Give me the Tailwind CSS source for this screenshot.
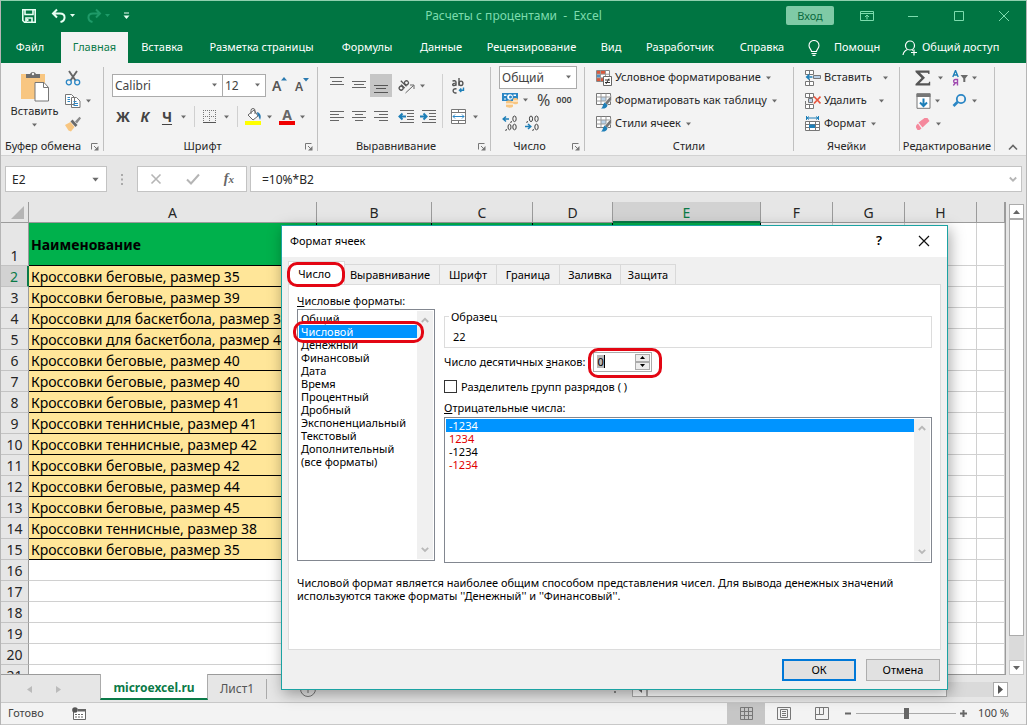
<!DOCTYPE html>
<html lang="ru">
<head>
<meta charset="utf-8">
<title>Расчеты с процентами - Excel</title>
<script src="https://cdn.jsdelivr.net/npm/@tailwindcss/browser@4"></script>
</head>
<body class="h-screen overflow-hidden bg-[#e6e6e6] font-['Noto_Sans',sans-serif] text-xs text-[#262626]">

<svg class="hidden" aria-hidden="true">
  <symbol id="caret" viewBox="0 0 7 4"><path d="M1 .5h5L3.500 3.500z" fill="#6b6b6b"/></symbol>
  <symbol id="launcher" viewBox="0 0 8 8"><path d="M.5 6.500V.5h6" fill="none" stroke="#777"/><path d="M3 3l3 3" stroke="#777" fill="none"/><path d="M7.500 3v4.500H3z" fill="#777"/></symbol>
  <symbol id="brushtable" viewBox="0 0 16 16"><path d="M.5.500h14v11H.5z" fill="#fff" stroke="#777"/><path d="M5 4h5v4H5z" fill="#b9d3ea"/><path d="M.5 4h14M.5 8h9M5 .5v11M10 .5v8" stroke="#999" fill="none"/><path d="M15.500 2v5L11 12 8.500 10z" fill="#777" stroke="#f3f3f3" stroke-width=".6"/><path d="M8.500 9.500l3 2.500c-.5 3-3 4-6.500 3.500 2-1 1.500-4 3.500-6z" fill="#1e7fb8"/></symbol>
</svg>

<div class="relative flex h-full flex-col overflow-hidden border-x border-t border-x-[#b5b5b5] border-t-[#8fd0ae]">

  <!-- Title bar -->
  <header class="grid h-[31px] shrink-0 grid-cols-[1fr_auto_1fr] items-center bg-[#007542] pb-0.5 text-[#7ddcae]">
    <div class="flex items-center pl-5">
      <button aria-label="Сохранить" class="flex w-4 justify-center"><svg class="h-4 w-4" viewBox="0 0 16 16" fill="none" stroke="#e8fff3" stroke-width="1.600"><path d="M1.800 1.800h12.400v12.400H3.500L1.800 12.500z"/><path d="M4 2v4.500h8V2M5 14v-4h6v4" /><path d="M6.500 11v2" stroke-width="2"/></svg></button>
      <button aria-label="Отменить" class="ml-3.5 flex w-4 justify-center"><svg class="h-4 w-4" viewBox="0 0 16 16" fill="none" stroke="#e8fff3" stroke-width="2"><path d="M6 1.500L2 5.500l4 4M2.500 5.500H9c6 0 6 7 .5 8.500"/></svg></button>
      <svg class="ml-0.5 h-1 w-[7px]" viewBox="0 0 7 4"><path d="M1 0h5L3.500 3z" fill="#e8fff3"/></svg>
      <button aria-label="Повторить" class="ml-2.5 flex w-4 justify-center"><svg class="h-4 w-4" viewBox="0 0 16 16" fill="none" stroke="#1e9a68" stroke-width="2"><path d="M10 1.500l4 4-4 4M13.500 5.500H7c-6 0-6 7-.5 8.500"/></svg></button>
      <svg class="ml-0.5 h-1 w-[7px]" viewBox="0 0 7 4"><path d="M1 0h5L3.500 3z" fill="#1e9a68"/></svg>
      <button aria-label="Настройка панели" class="ml-3"><svg class="h-2 w-[7px]" viewBox="0 0 7 8"><path d="M1 1h5" stroke="#e8fff3"/><path d="M.5 3.500h6L3.500 7z" fill="#e8fff3"/></svg></button>
    </div>
    <h1 class="whitespace-pre">Расчеты с процентами  -  Excel</h1>
    <div class="flex items-center justify-end">
      <button class="mr-2.5 h-[19px] w-12 rounded-xs bg-[#7fcaa6] text-[11px] leading-4 text-[#0a6b40]">Вход</button>
      <button aria-label="Параметры ленты" class="flex w-[46px] justify-center"><svg class="h-3 w-[14px]" viewBox="0 0 14 12" fill="none" stroke="#7ddcae"><path d="M.5 1.500h13v9H.5zM.5 3.500h13M7 9.500V5M5 7l2-2 2 2"/></svg></button>
      <button aria-label="Свернуть" class="flex w-[46px] justify-center"><svg class="h-3 w-3" viewBox="0 0 12 12" stroke="#7ddcae"><path d="M1 6.500h10"/></svg></button>
      <button aria-label="Развернуть" class="flex w-[46px] justify-center"><svg class="h-3 w-3" viewBox="0 0 12 12" fill="none" stroke="#7ddcae"><path d="M1.500 1.500h9v9h-9z"/></svg></button>
      <button aria-label="Закрыть" class="flex w-11 justify-center"><svg class="h-3 w-3" viewBox="0 0 12 12" stroke="#7ddcae"><path d="M1 1l10 10M11 1L1 11"/></svg></button>
    </div>
  </header>

  <!-- Ribbon tabs -->
  <nav class="flex h-[31px] shrink-0 items-stretch whitespace-nowrap bg-[#007542] text-[11px] text-white">
    <button class="w-[60px] pr-0.5">Файл</button>
    <button class="w-[67px] bg-[#f3f3f3] text-[#0a7a48]">Главная</button>
    <button class="w-[68px]">Вставка</button>
    <button class="w-[131px]">Разметка страницы</button>
    <button class="w-[80px]">Формулы</button>
    <button class="w-[68px]">Данные</button>
    <button class="w-[113px]">Рецензирование</button>
    <button class="w-[46px]">Вид</button>
    <button class="w-[92px]">Разработчик</button>
    <button class="w-[72px]">Справка</button>
    <button class="ml-[9px] flex items-center gap-[13px]"><svg class="h-4 w-3.5" viewBox="0 0 14 16" fill="none" stroke="#fff" stroke-width="1.100"><path d="M4.500 11.500c0-2-2.500-3-2.500-6a5 5 0 0110 0c0 3-2.500 4-2.500 6zM4.500 13.500h5M5.500 15.400h3"/></svg><span class="w-[50px] text-left">Помощн</span></button>
    <button class="ml-[18px] flex items-center gap-1"><svg class="h-4 w-4" viewBox="0 0 16 16" fill="none" stroke="#fff" stroke-width="1.200"><circle cx="8" cy="5.500" r="4.500"/><path d="M5.500 9.500C3 10.500 1.500 12 1 15M10 9.700l1 .8M12 9.500v6M9 12.500h6"/></svg>Общий доступ</button>
  </nav>

  <!-- Ribbon -->
  <section class="flex h-[93px] shrink-0 whitespace-nowrap border-b border-[#d2d2d2] bg-[#f3f3f3] text-[11px]">
    <!-- Clipboard -->
    <div class="flex w-[102px] shrink-0 flex-col">
      <div class="flex flex-1">
        <button class="flex w-[61px] flex-col items-center pl-1.5 pt-2">
          <svg class="h-[31px] w-7" viewBox="0 0 28 31"><path d="M0 3h24v25H0z" fill="#f8c681"/><path d="M5 3h4a3.200 3.200 0 016 0h4v4H5z" fill="#6e6e6e"/><circle cx="12" cy="3" r="1.200" fill="#f3f3f3"/><path d="M14 11.500h9l4.500 5V30H14z" fill="#fff" stroke="#777"/><path d="M22.500 11.500v5h5" fill="none" stroke="#777"/></svg>
          <span class="mt-0.5">Вставить</span>
          <svg class="mt-1 h-1 w-[7px]"><use href="#caret"/></svg>
        </button>
        <div class="flex flex-col pt-[3px]">
          <button aria-label="Вырезать" class="flex h-[23px] w-[22px] items-center justify-center"><svg class="h-4 w-4" viewBox="0 0 16 16" fill="none"><path d="M4 1l6.500 9.500M12 1L5.500 10.500" stroke="#666" stroke-width="1.900"/><circle cx="3.800" cy="12.300" r="2.500" stroke="#2a86c5" stroke-width="1.300"/><circle cx="12.200" cy="12.300" r="2.500" stroke="#2a86c5" stroke-width="1.300"/></svg></button>
          <button aria-label="Копировать" class="flex h-[23px] items-center gap-1 pl-[3px]"><svg class="h-4 w-4" viewBox="0 0 16 16" fill="#fff" stroke="#777"><path d="M.5 1.500h6l3 3v7h-9zM6.500 4.500h5l3.500 3.500v6.500H6.500z"/><path d="M2.500 4.500H5M2.500 6.500H5M2.500 8.500H5M8.500 8.500h3M8.500 10.500h4.500M8.500 12.500h4.500" stroke="#2a86c5"/></svg><svg class="h-1 w-[7px]"><use href="#caret"/></svg></button>
          <button aria-label="Формат по образцу" class="flex h-[23px] w-[22px] items-center justify-center"><svg class="h-4 w-4" viewBox="0 0 16 16"><path d="M0 9l5.500-3 4 5-3.500 4.500-2.500-1z" fill="#f8c681"/><path d="M5.500 5.500l2-2 5 5.500-2 2z" fill="#6a6a6a"/><path d="M10 5.500L14.500.8l1.500 1.500L12 7.500z" fill="#8a8a8a"/></svg></button>
        </div>
      </div>
      <div class="flex h-[17px] items-center pl-1"><span>Буфер обмена</span><svg class="ml-auto mr-1 h-2 w-2"><use href="#launcher"/></svg></div>
    </div>
    <div class="my-1 w-px bg-[#c0c0c0]"></div>

    <!-- Font -->
    <div class="flex w-[213px] shrink-0 flex-col">
      <div class="flex flex-1 flex-col gap-2 pl-2 pt-[11px]">
        <div class="flex h-[23px] items-center">
          <div class="relative h-full w-[111px] border border-[#ababab] bg-white text-xs"><select aria-label="Шрифт" class="h-full w-full appearance-none pl-0.5 text-[#444]"><option>Calibri</option></select><svg class="pointer-events-none absolute right-1 top-2 h-1 w-[7px]"><use href="#caret"/></svg></div>
          <div class="relative -ml-px h-full w-[44px] border border-[#ababab] bg-white text-xs"><select aria-label="Размер" class="h-full w-full appearance-none pl-0.5 text-[#444]"><option>12</option></select><svg class="pointer-events-none absolute right-1 top-2 h-1 w-[7px]"><use href="#caret"/></svg></div>
          <button aria-label="Увеличить размер" class="ml-1.5 flex w-[18px]"><span class="text-sm font-semibold text-[#555]">A</span><svg class="h-1.5 w-1.5" viewBox="0 0 6 6"><path d="M0 4.500l3-3.500 3 3.500z" fill="#2a7ab0"/></svg></button>
          <button aria-label="Уменьшить размер" class="ml-[5px] flex w-[18px]"><span class="pt-0.5 text-xs font-semibold text-[#555]">A</span><svg class="h-1.5 w-1.5" viewBox="0 0 6 6"><path d="M0 1h6L3 4.500z" fill="#2a7ab0"/></svg></button>
        </div>
        <div class="flex h-[23px] items-center text-sm text-[#444]">
          <button class="w-[22px] font-bold">Ж</button>
          <button class="w-[22px] font-bold italic">К</button>
          <button class="w-[22px] font-bold underline underline-offset-2">Ч</button>
          <svg class="ml-0.5 h-1 w-[7px]"><use href="#caret"/></svg>
          <div class="ml-[7px] h-[21px] w-px bg-[#d0d0d0]"></div>
          <button aria-label="Границы" class="ml-2 flex"><svg class="h-[13px] w-[13px]" viewBox="0 0 13 13" fill="none" stroke="#777"><path d="M.5 0v12M6.500 0v12M12.500 0v12M0 .5h13M0 6.500h13" stroke-dasharray="1 1"/><path d="M0 12.500h13" stroke="#555"/></svg></button>
          <svg class="ml-[7px] h-1 w-[7px]"><use href="#caret"/></svg>
          <div class="ml-[7px] h-[21px] w-px bg-[#d0d0d0]"></div>
          <button aria-label="Цвет заливки" class="ml-[7px] flex"><svg class="h-[17px] w-[17px]" viewBox="0 0 17 17"><path d="M3 7l6-5 4 6-5 4z" fill="#fff" stroke="#666"/><path d="M6 6V2.500a2 2 0 014 0V6" fill="none" stroke="#666"/><path d="M12 4c4 1 4.500 5 3 8-1-2-1-4-2.500-5z" fill="#2a7ab0"/><path d="M0 13h16v4H0z" fill="#ff0"/></svg></button>
          <svg class="ml-1 h-1 w-[7px]"><use href="#caret"/></svg>
          <button aria-label="Цвет текста" class="ml-1.5 flex flex-col items-center"><span class="h-[13px] text-sm font-bold leading-[13px] text-[#666]">А</span><span class="h-1 w-4 bg-[#f00000]"></span></button>
          <svg class="ml-1 h-1 w-[7px]"><use href="#caret"/></svg>
        </div>
      </div>
      <div class="flex h-[17px] items-center"><span class="flex-1 pr-1 text-center">Шрифт</span><svg class="mr-1 h-2 w-2"><use href="#launcher"/></svg></div>
    </div>
    <div class="my-1 w-px bg-[#c0c0c0]"></div>

    <!-- Alignment -->
    <div class="flex w-[172px] shrink-0 flex-col">
      <div class="flex flex-1 pl-2 pt-[11px]">
        <div class="flex w-[116px] flex-col gap-2">
          <div class="flex h-[23px] items-center">
            <button aria-label="По верхнему краю" class="flex h-full w-[22px] justify-center pt-[3px]"><svg class="h-3 w-[14px]" viewBox="0 0 14 12" stroke="#666"><path d="M0 .5h14M2 4.500h10M0 7.500h14"/></svg></button>
            <button aria-label="По середине" class="flex h-full w-[22px] items-center justify-center"><svg class="h-3 w-[14px]" viewBox="0 0 14 12" stroke="#666"><path d="M0 1.500h14M2 4.500h10M0 7.500h14"/></svg></button>
            <button aria-label="По нижнему краю" class="flex h-full w-[22px] items-end justify-center bg-[#c6c6c6] pb-1"><svg class="h-3 w-[14px]" viewBox="0 0 14 12" stroke="#555"><path d="M0 4.500h14M2 7.500h10M0 11.500h14"/></svg></button>
            <button aria-label="Ориентация" class="ml-1.5 flex"><svg class="h-4 w-[17px] overflow-visible" viewBox="0 0 17 16" fill="none"><g transform="rotate(-45 6 8)" stroke="#555" stroke-width="1.300"><circle cx="2.500" cy="7.500" r="2"/><path d="M5 5v5M7.500 2v8"/><circle cx="10" cy="7.500" r="2"/></g><path d="M7.500 15L15.500 7.500M12 7h4v4" stroke="#666"/></svg></button>
            <svg class="ml-1 h-1 w-[7px]"><use href="#caret"/></svg>
          </div>
          <div class="flex h-[23px] items-center">
            <button aria-label="По левому краю" class="flex w-[22px] justify-center"><svg class="h-3 w-[14px]" viewBox="0 0 14 12" stroke="#666"><path d="M0 .5h14M0 3.500h9M0 6.500h14M0 9.500h9"/></svg></button>
            <button aria-label="По центру" class="flex w-[22px] justify-center"><svg class="h-3 w-[14px]" viewBox="0 0 14 12" stroke="#666"><path d="M0 .5h14M3 3.500h8M0 6.500h14M3 9.500h8"/></svg></button>
            <button aria-label="По правому краю" class="flex w-[22px] justify-center"><svg class="h-3 w-[14px]" viewBox="0 0 14 12" stroke="#666"><path d="M0 .5h14M5 3.500h9M0 6.500h14M5 9.500h9"/></svg></button>
            <button aria-label="Уменьшить отступ" class="ml-1.5 flex"><svg class="h-[14px] w-4" viewBox="0 0 16 14" fill="none" stroke="#666"><path d="M2 .5h14M9 3.500h7M9 6.500h7M9 9.500h7M2 12.500h14"/><path d="M8 6.500H2M4.500 3.500l-3 3 3 3" stroke="#1e7fb8" stroke-width="2"/></svg></button>
            <button aria-label="Увеличить отступ" class="ml-1.5 flex"><svg class="h-[14px] w-4" viewBox="0 0 16 14" fill="none" stroke="#666"><path d="M2 .5h14M9 3.500h7M9 6.500h7M9 9.500h7M2 12.500h14"/><path d="M0 6.500h6M3.500 3.500l3 3-3 3" stroke="#1e7fb8" stroke-width="2"/></svg></button>
          </div>
        </div>
        <div class="h-[54px] w-px bg-[#d0d0d0]"></div>
        <div class="flex flex-col gap-2 pl-2">
          <button aria-label="Перенести текст" class="flex h-[23px] items-center"><svg class="h-4 w-4" viewBox="0 0 16 16" fill="none" stroke="#555" stroke-width="1.400"><path d="M1.500 3.200c1-.7 3.500-.7 3.500 1v3.500M5 5.200c-4-.3-4 2.500-2 2.300 1 0 2-.8 2-1.500M8 0v7.700"/><ellipse cx="10" cy="5.300" rx="1.900" ry="2.200"/><path d="M5.500 11c-4.500-1.500-4.500 5 0 3.800"/><path d="M12.500 9.500v2.800H8.500M10.300 10.500L8.500 12.300l1.800 1.700" stroke="#1e7fb8"/></svg></button>
          <button aria-label="Объединить" class="flex h-[23px] items-center gap-1.5"><svg class="h-[15px] w-[15px]" viewBox="0 0 15 15" fill="#fff" stroke="#777"><path d="M.5.500h14v14H.5zM7.500.500v3M7.500 11.500v3M.5 3.500h14M.5 11.500h14"/><path d="M2 7.500h11M4 5.500l-2 2 2 2M11 5.500l2 2-2 2" fill="none" stroke="#2a86c5"/></svg><svg class="h-1 w-[7px]"><use href="#caret"/></svg></button>
        </div>
      </div>
      <div class="flex h-[17px] items-center"><span class="flex-1 pr-1 text-center">Выравнивание</span><svg class="mr-1 h-2 w-2"><use href="#launcher"/></svg></div>
    </div>
    <div class="my-1 w-px bg-[#c0c0c0]"></div>

    <!-- Number -->
    <div class="flex w-[93px] shrink-0 flex-col">
      <div class="flex flex-1 flex-col pl-2 pt-[3px]">
        <div class="relative h-[23px] w-[78px] border border-[#ababab] bg-white text-xs"><select aria-label="Числовой формат" class="h-full w-full appearance-none pl-0.5 text-[#444]"><option>Общий</option></select><svg class="pointer-events-none absolute right-1 top-2 h-1 w-[7px]"><use href="#caret"/></svg></div>
        <div class="flex h-[22px] items-center pl-[3px] text-[#444]">
          <button aria-label="Финансовый формат" class="flex"><svg class="h-4 w-4" viewBox="0 0 16 16"><path d="M0 1h16v8H0z" fill="#2a86c5"/><path d="M2 2.500h2.500v1.500H2zM11.500 2.500H14v1.500h-2.500zM2 6.500h2v1H2z" fill="#fff"/><circle cx="8" cy="5" r="2.800" fill="#fff"/><circle cx="8.500" cy="5" r="1.500" fill="#2a86c5"/><path d="M4 10c0-2 6-2 7 0v4.500c-1 2-7 1-7 0zM11 7c1-1.500 5-1 5 .5v4c-1 1-4 1-5 0z" fill="#f8c681"/><path d="M4 12h7M11 9h5" stroke="#fff"/></svg></button>
          <svg class="ml-1 h-1 w-[7px]"><use href="#caret"/></svg>
          <button class="ml-2 text-base">%</button>
          <button class="ml-1.5 text-[9px] font-semibold">000</button>
        </div>
        <div class="flex h-[23px] items-center gap-1.5 pl-[3px]">
          <button aria-label="Увеличить разрядность" class="flex"><svg class="h-4 w-4" viewBox="0 0 16 16" fill="none" stroke="#444"><ellipse cx="12.500" cy="3.800" rx="1.700" ry="2.800"/><path d="M9.500 6l-.8 2M4.500 14l-.8 2"/><ellipse cx="7.500" cy="12" rx="1.500" ry="2.800"/><ellipse cx="12.500" cy="12" rx="1.700" ry="2.800"/><path d="M7 4H1.500M4 1.500L1.200 4 4 6.500" stroke="#1e7fb8" stroke-width="1.500"/></svg></button>
          <button aria-label="Уменьшить разрядность" class="flex"><svg class="h-4 w-4" viewBox="0 0 16 16" fill="none" stroke="#444"><ellipse cx="7" cy="3.800" rx="1.600" ry="2.800"/><ellipse cx="12.500" cy="3.800" rx="1.700" ry="2.800"/><path d="M3.500 6l-.8 2M9.500 14l-.8 2"/><ellipse cx="12.500" cy="12" rx="1.700" ry="2.800"/><path d="M1 11.500h5.500M4 9l2.800 2.500L4 14" stroke="#1e7fb8" stroke-width="1.500"/></svg></button>
        </div>
      </div>
      <div class="flex h-[17px] items-center"><span class="flex-1 pr-1 text-center">Число</span><svg class="mr-1 h-2 w-2"><use href="#launcher"/></svg></div>
    </div>
    <div class="my-1 w-px bg-[#c0c0c0]"></div>

    <!-- Styles -->
    <div class="flex w-[208px] shrink-0 flex-col">
      <div class="flex flex-1 flex-col items-start pl-[11px] pt-[3px]">
        <button class="flex h-[23px] items-center"><svg class="h-4 w-4" viewBox="0 0 16 16"><path d="M.5.500h13v11H.5z" fill="#fff" stroke="#888"/><path d="M1 1h6v3H1zM1 8h6v3H1z" fill="#d9593d"/><path d="M1 4.500h4v3H1z" fill="#4d8fc4"/><path d="M7 1h3v3H7z" fill="#d9593d"/><path d="M4.500.500v11M9.500.500v6M.5 4.200h13M.5 7.800h7" stroke="#999" fill="none"/><path d="M7.500 6.500h8v9h-8z" fill="#fff" stroke="#666"/><path d="M9 10h5M9 12.500h5M13 8.500l-3 5.500" stroke="#333" fill="none"/></svg><span class="ml-[3px]">Условное форматирование</span><svg class="ml-1 h-1 w-[7px]"><use href="#caret"/></svg></button>
        <button class="flex h-[23px] items-center"><svg class="h-4 w-4"><use href="#brushtable"/></svg><span class="ml-[3px]">Форматировать как таблицу</span><svg class="ml-1 h-1 w-[7px]"><use href="#caret"/></svg></button>
        <button class="flex h-[23px] items-center"><svg class="h-4 w-4"><use href="#brushtable"/></svg><span class="ml-[3px]">Стили ячеек</span><svg class="ml-1 h-1 w-[7px]"><use href="#caret"/></svg></button>
      </div>
      <div class="flex h-[17px] items-center justify-center">Стили</div>
    </div>
    <div class="my-1 w-px bg-[#c0c0c0]"></div>

    <!-- Cells -->
    <div class="flex w-[105px] shrink-0 flex-col">
      <div class="flex flex-1 flex-col items-start pl-[11px] pt-[3px]">
        <button class="flex h-[23px] items-center"><svg class="h-4 w-4" viewBox="0 0 16 16" fill="#fff" stroke="#777"><path d="M.5.500h8v4h-8zM4.500.500v4M.5 11.500h8v4h-8zM4.500 11.500v4M4.500 9v3"/><path d="M8.500 5.500h7v3h-7z" fill="#b9cfe6"/><path d="M7.500 7H2M4.500 4.500L1.800 7l2.700 2.500" fill="none" stroke="#1e7fb8" stroke-width="1.700"/></svg><span class="ml-[3px] w-[50px] text-left">Вставить</span><svg class="ml-2 h-1 w-[7px]"><use href="#caret"/></svg></button>
        <button class="flex h-[23px] items-center"><svg class="h-4 w-4" viewBox="0 0 16 16" fill="#fff" stroke="#777"><path d="M.5.500h8v4h-8zM4.500.500v4M.5 11.500h8v4h-8zM4.500 11.500v4M.5 8v3"/><path d="M3.500 5.500h4v4h-4z" fill="#b9cfe6"/><path d="M9 3.500l6.500 7M15.500 3.500l-6.500 7" stroke="#e8563f" stroke-width="1.700"/></svg><span class="ml-[3px] w-[46px] text-left">Удалить</span><svg class="ml-2 h-1 w-[7px]"><use href="#caret"/></svg></button>
        <button class="flex h-[23px] items-center"><svg class="h-4 w-4" viewBox="0 0 16 16" fill="#fff" stroke="#777"><path d="M.5 5.500h14v9H.5z"/><path d="M.5 8.500h14M.5 11.500h14M4.500 5.500v9M10.500 5.500v9"/><path d="M4 8.500h6v3.500H4z" fill="#1e7fb8" stroke="none"/><path d="M1 2h12M1.500 0v4M13.500 0v4M4 .5L2 2l2 1.500M11 .5L13 2l-2 1.500" stroke="#1e7fb8" fill="none"/></svg><span class="ml-[3px]">Формат</span><svg class="ml-1 h-1 w-[7px]"><use href="#caret"/></svg></button>
      </div>
      <div class="flex h-[17px] items-center justify-center">Ячейки</div>
    </div>
    <div class="my-1 w-px bg-[#c0c0c0]"></div>

    <!-- Editing -->
    <div class="flex w-[94px] shrink-0 flex-col">
      <div class="grid flex-1 auto-rows-[23px] grid-cols-[31px_auto] content-start items-center justify-start pl-[15px] pt-[3px]">
        <button aria-label="Автосумма" class="flex items-center gap-1.5"><svg class="h-4 w-4" viewBox="0 0 16 16"><path d="M.5.500h14V4h-1.200c0-1-.5-1.300-1.300-1.300H5l5 5-5.500 5.500h8c1 0 1.500-.4 1.500-1.500h1.200V15.500H.5V14l6-6-6-6z" fill="#555"/></svg><svg class="h-1 w-[7px]"><use href="#caret"/></svg></button>
        <button aria-label="Сортировка и фильтр" class="ml-1.5 flex items-center gap-[3px]"><svg class="h-4 w-4" viewBox="0 0 16 16" fill="none"><path d="M.8 7L3.500.5 6.200 7M1.800 5h3.500" stroke="#1e7fb8" stroke-width="1.400"/><path d="M5.500 15.500V9.500H3.300a1.600 1.600 0 000 3.300h2.200M3.500 12.800L1.300 15.500" stroke="#a04ab0" stroke-width="1.400"/><path d="M8.500 5H16l-2.700 3.500v3.500h-2V8.500z" fill="#6a6a6a"/></svg><svg class="h-1 w-[7px]"><use href="#caret"/></svg></button>
        <button aria-label="Заполнить" class="flex items-center gap-[3px]"><svg class="ml-px h-4 w-[15px]" viewBox="0 0 15 16"><path d="M1 .8h13v14.500H1z" fill="#fff" stroke="#777"/><path d="M.5.500h14v3.500H.5z" fill="#777"/><path d="M7.500 5.500V13M4 9.500L7.500 13 11 9.500" fill="none" stroke="#1e7fb8" stroke-width="2"/></svg><svg class="h-1 w-[7px]"><use href="#caret"/></svg></button>
        <button aria-label="Найти" class="ml-1.5 flex items-center gap-[3px]"><svg class="h-[15px] w-4" viewBox="0 0 16 15" fill="none" stroke="#2a86c5"><circle cx="9" cy="6" r="4.200" stroke-width="1.800"/><path d="M5.500 9L1.500 13" stroke-width="2.600"/></svg><svg class="h-1 w-[7px]"><use href="#caret"/></svg></button>
        <button aria-label="Очистить" class="flex items-center gap-1"><svg class="h-4 w-4" viewBox="0 0 16 16"><path d="M9.500 2h3L14.500 5l-7 6.500-4-5z" fill="#f5889c"/><path d="M3 7.500l3.500 5-2 1.500H2.500L1 11.500v-2z" fill="#f5889c"/></svg><svg class="h-1 w-[7px]"><use href="#caret"/></svg></button>
      </div>
      <div class="flex h-[17px] items-center justify-center">Редактирование</div>
    </div>
    <div class="my-1 w-px bg-[#c0c0c0]"></div>
    <div class="flex flex-1 items-end justify-center pb-1 pl-1"><button aria-label="Свернуть ленту"><svg class="h-2 w-2.5" viewBox="0 0 10 8" fill="none" stroke="#666" stroke-width="1.600"><path d="M1 6.500l4-4 4 4"/></svg></button></div>
  </section>

  <!-- Formula bar -->
  <section class="flex h-[46px] shrink-0 items-start px-1 pt-2.5">
    <div class="relative h-[26px] w-[102px] border border-[#c3c3c3] bg-white"><input aria-label="Имя ячейки" value="E2" class="h-full w-full pl-1.5 outline-none"><svg class="pointer-events-none absolute right-1.5 top-2.5 h-[5px] w-[9px]" viewBox="0 0 7 4"><use href="#caret"/></svg></div>
    <svg class="mx-3.5 mt-2 h-3 w-0.5" viewBox="0 0 2 12"><path d="M0 0h2v2H0zM0 4.500h2v2H0zM0 9h2v2H0z" fill="#aaa"/></svg>
    <div class="flex h-[26px] w-[110px] items-center justify-around border border-[#c3c3c3] bg-white">
      <button aria-label="Отмена ввода"><svg class="h-3 w-3" viewBox="0 0 12 12" stroke="#b5b5b5" stroke-width="1.600"><path d="M1.500 1.500l9 9M10.500 1.500l-9 9"/></svg></button>
      <button aria-label="Ввод"><svg class="h-3 w-3.5" viewBox="0 0 14 12" fill="none" stroke="#b5b5b5" stroke-width="2"><path d="M1 6.500L5 10.500 13 1.500"/></svg></button>
      <button aria-label="Вставить функцию" class="font-['Liberation_Serif',serif] text-sm font-semibold italic leading-4 text-[#666]">f<span class="text-[11px]">x</span></button>
    </div>
    <div class="relative ml-[3px] h-[26px] flex-1 border border-[#c3c3c3] bg-white"><input aria-label="Строка формул" value="=10%*B2" class="h-full w-full pl-[11px] outline-none"><svg class="pointer-events-none absolute right-1 top-2 h-2 w-2" viewBox="0 0 8 8" fill="none" stroke="#b5b5b5" stroke-width="1.800"><path d="M.8 2.500L4 5.700l3.200-3.200"/></svg></div>
  </section>

  <!-- Worksheet -->
  <main class="flex min-h-0 flex-1">
    <div class="min-w-0 flex-1 overflow-hidden border-b border-r border-[#9b9b9b] bg-white">
      <table class="w-full table-fixed border-separate border-spacing-0 text-sm">
        <colgroup><col class="w-7"><col class="w-[288px]"><col class="w-[115px]"><col class="w-[101px]"><col class="w-20"><col class="w-[148px]"><col class="w-[72px]"><col class="w-[72px]"><col class="w-[72px]"><col></colgroup>
        <thead><tr id="letters"></tr></thead>
        <tbody id="rows"></tbody>
      </table>
    </div>
    <div class="flex w-5 flex-col items-center pt-0.5">
      <button aria-label="Вверх" class="flex h-[15px] w-[15px] items-center justify-center border border-[#ababab] bg-white"><svg class="h-1 w-[7px]" viewBox="0 0 7 4"><path d="M0 4h7L3.500 0z" fill="#666"/></svg></button>
      <div class="flex w-[15px] flex-1 flex-col bg-[#dadada]"><div class="mb-6 flex-1 border border-[#ababab] bg-white"></div></div>
      <button aria-label="Вниз" class="flex h-[15px] w-[15px] items-center justify-center border border-[#c8c8c8] bg-white"><svg class="h-1 w-[7px]" viewBox="0 0 7 4"><path d="M0 0h7L3.500 4z" fill="#666"/></svg></button>
    </div>
  </main>

  <!-- Sheet tabs -->
  <section class="flex h-7 shrink-0 items-start border-b border-[#c8c8c8]">
    <div class="flex h-7 w-[99px] items-center gap-6 pl-[26px]"><svg class="h-[7px] w-[5px]" viewBox="0 0 5 7"><path d="M5 0v7L0 3.500z" fill="#bbb"/></svg><svg class="h-[7px] w-[5px]" viewBox="0 0 5 7"><path d="M0 0v7l5-3.500z" fill="#bbb"/></svg></div>
    <button class="-mt-px h-[26px] w-[108px] border-x border-b-2 border-x-[#ababab] border-b-[#0a7a48] bg-white pt-1 font-bold text-[#0a7a48]">microexcel.ru</button>
    <button class="h-[27px] w-[58px] text-[#555]">Лист1</button>
    <div class="mt-1 h-5 w-px bg-[#aaa]"></div>
    <button aria-label="Новый лист" class="ml-[33px] mt-1.5"><svg class="h-4 w-4" viewBox="0 0 16 16" fill="none" stroke="#777"><circle cx="8" cy="8" r="7.500"/><path d="M8 4v8M4 8h8"/></svg></button>
    <div class="ml-auto mr-4 mt-4 h-0.5 w-0.5 bg-[#888]"></div>
    <div class="mr-[18px] mt-[7px] flex h-[15px] w-[376px]">
      <button aria-label="Влево" class="flex w-[15px] items-center justify-center border border-[#ababab] bg-white"><svg class="h-[7px] w-1" viewBox="0 0 4 7"><path d="M4 0v7L0 3.500z" fill="#666"/></svg></button>
      <div class="flex flex-1 bg-[#dadada]"><div class="w-[300px] border border-[#ababab] bg-white"></div></div>
      <button aria-label="Вправо" class="flex w-[15px] items-center justify-center border border-[#ababab] bg-white"><svg class="h-[9px] w-[5px]" viewBox="0 0 5 9"><path d="M0 0v9l5-4.500z" fill="#555"/></svg></button>
    </div>
  </section>

  <!-- Status bar -->
  <footer class="flex h-[22px] shrink-0 items-center border-b border-[#c8c8c8] bg-[#f3f3f3] text-[11px] text-[#444]">
    <span class="ml-[7px] w-16">Готово</span>
    <svg class="h-[13px] w-[14px]" viewBox="0 0 14 13"><path d="M1.500 5v7.500h12v-10H6" fill="#fff" stroke="#666"/><path d="M6 2h8v2.500H6z" fill="#666"/><path d="M3 7.500h9M3 10h9" stroke="#666" stroke-dasharray="2 1"/><circle cx="3" cy="3" r="2.800" fill="#555"/></svg>
    <div class="ml-auto flex h-full items-center">
      <button aria-label="Обычный" class="flex h-full w-[38px] items-center justify-center bg-[#c6c6c6]"><svg class="h-[13px] w-[13px]" viewBox="0 0 13 13" fill="none" stroke="#777"><path d="M.5.500h12v12H.5zM4.500.500v12M8.500.500v12M.5 4.500h12M.5 8.500h12"/></svg></button>
      <button aria-label="Разметка страницы" class="flex w-[38px] justify-center"><svg class="h-[13px] w-[14px]" viewBox="0 0 14 13" fill="none" stroke="#777"><path d="M.5.500h13v12H.5zM3.500 2.500h7v8h-7zM5 4.500h4M5 6.500h4M5 8.500h4"/></svg></button>
      <button aria-label="Страничный режим" class="flex w-[38px] justify-center"><svg class="h-[13px] w-[14px]" viewBox="0 0 14 13" fill="none" stroke="#777"><path d="M.5.500h13v12H.5zM4.500.500v7M8.500.500v7M.5 7.500h8"/></svg></button>
      <svg class="ml-1 h-[7px] w-[7px]" viewBox="0 0 7 7"><path d="M0 2.500h6v2H0z" fill="#666"/></svg>
      <input type="range" aria-label="Масштаб" value="50" class="mx-1 h-3 w-[100px] appearance-none bg-[linear-gradient(#aaa,#aaa)] bg-[length:100%_1px] bg-center bg-no-repeat [&::-webkit-slider-thumb]:h-[11px] [&::-webkit-slider-thumb]:w-[5px] [&::-webkit-slider-thumb]:appearance-none [&::-webkit-slider-thumb]:bg-[#666]">
      <svg class="h-[7px] w-[7px]" viewBox="0 0 7 7"><path d="M0 2.500h7v2H0zM2.500 0h2v7h-2z" fill="#666"/></svg>
      <span class="ml-[11px] mr-[17px]">100 %</span>
    </div>
  </footer>

  <!-- Format cells dialog, floating above the worksheet -->
  <div role="dialog" aria-labelledby="dlg" class="absolute left-[280px] top-[224px] flex h-[465px] w-[667px] flex-col border border-[#1ba3a3] bg-[#f0f0f0] text-[11px] leading-[13px] text-black shadow-[2px_4px_14px_rgba(0,0,0,0.35)]">
    <div class="flex h-[31px] shrink-0 items-center bg-white pb-0.5 pl-2">
      <h2 id="dlg">Формат ячеек</h2>
      <button aria-label="Справка" class="ml-auto w-[22px] text-[13px] font-semibold">?</button>
      <button aria-label="Закрыть окно" class="ml-7 mr-[17px]"><svg class="h-3 w-3" viewBox="0 0 12 12" stroke="#111" stroke-width="1.200"><path d="M1 1l10 10M11 1L1 11"/></svg></button>
    </div>
    <div class="flex shrink-0 items-end px-1.5 pt-1">
      <button class="h-[23px] w-[57px] border border-b-0 border-[#dcdcdc] bg-white pr-1">Число</button>
      <button class="h-5 w-[95px] border-r border-t border-[#d9d9d9] pr-1">Выравнивание</button>
      <button class="h-5 w-[57px] border-r border-t border-[#d9d9d9]">Шрифт</button>
      <button class="h-5 w-[63px] border-r border-t border-[#d9d9d9]">Граница</button>
      <button class="h-5 w-[61px] border-r border-t border-[#d9d9d9]">Заливка</button>
      <button class="h-5 w-[55px] border-r border-t border-[#d9d9d9]">Защита</button>
    </div>
    <div class="mx-1.5 flex h-[366px] shrink-0 flex-col border border-[#dcdcdc] bg-white px-2 pt-[9px]">
      <div class="flex h-[269px] gap-[9px]">
        <div class="flex w-[138px] flex-col">
          <span id="fmt"><u>Ч</u>исловые форматы:</span>
          <div class="mt-0.5 flex h-[252px] border border-[#828790] p-px">
            <ul role="listbox" aria-labelledby="fmt" class="flex-1 whitespace-nowrap pt-px [&>li]:pl-0.5">
              <li role="option">Общий</li><li role="option" aria-selected="true" class="bg-[#0094ff] text-white">Числовой</li><li role="option">Денежный</li><li role="option">Финансовый</li><li role="option">Дата</li><li role="option">Время</li><li role="option">Процентный</li><li role="option">Дробный</li><li role="option">Экспоненциальный</li><li role="option">Текстовый</li><li role="option">Дополнительный</li><li role="option">(все форматы)</li>
            </ul>
            <div class="flex w-4 flex-col items-center justify-between bg-[#f0f0f0] py-1.5"><svg class="h-[7px] w-2" viewBox="0 0 8 7" fill="none" stroke="#b8b8b8" stroke-width="1.800"><path d="M.8 5L4 1.800 7.200 5"/></svg><svg class="h-[7px] w-2" viewBox="0 0 8 7" fill="none" stroke="#b8b8b8" stroke-width="1.800"><path d="M.8 1.800L4 5l3.200-3.200"/></svg></div>
          </div>
        </div>
        <div class="flex flex-1 flex-col pt-4">
          <fieldset class="h-[38px] border border-[#dcdcdc]"><legend class="ml-1 px-0.5">Образец</legend><output class="block pl-2 pt-[7px]">22</output></fieldset>
          <div class="mt-1 flex h-5 items-center"><label for="dec">Число десятичных <u>з</u>наков:</label>
            <div class="relative ml-2 flex h-5 w-[59px] items-center border border-[#ababab] p-px after:absolute after:-left-[6px] after:-top-[5px] after:h-[30px] after:w-[74px] after:rounded-[10px] after:border-3 after:border-[#e30613] after:content-['']">
              <input id="dec" value="0" class="ml-0.5 w-2 border-r border-black bg-[#b8b8b8] outline-none">
              <div class="ml-auto flex h-full w-[15px] flex-col"><button aria-label="Больше" class="flex flex-1 items-center justify-center border border-[#ababab] bg-[#ececec]"><svg class="h-[3px] w-[5px]" viewBox="0 0 5 3"><path d="M0 3h5L2.500 0z"/></svg></button><button aria-label="Меньше" class="flex flex-1 items-center justify-center border border-[#ababab] bg-[#ececec]"><svg class="h-[3px] w-[5px]" viewBox="0 0 5 3"><path d="M0 0h5L2.500 3z"/></svg></button></div>
            </div>
          </div>
          <label class="mt-2 flex items-center gap-1"><input type="checkbox" class="h-[13px] w-[13px] appearance-none border border-[#333] bg-white"><span>Разделитель <u>г</u>рупп разрядов ( )</span></label>
          <span id="neg" class="mt-2"><u>О</u>трицательные числа:</span>
          <div class="mt-[3px] flex h-[147px] border border-[#828790] p-px">
            <ul role="listbox" aria-labelledby="neg" class="flex-1 [&>li]:pl-[3px]"><li role="option" aria-selected="true" class="bg-[#0094ff] text-white">-1234</li><li role="option" class="text-[#e00000]">1234</li><li role="option">-1234</li><li role="option" class="text-[#e00000]">-1234</li></ul>
            <div class="flex w-4 flex-col items-center justify-between bg-[#f0f0f0] py-1.5"><svg class="h-[7px] w-2" viewBox="0 0 8 7" fill="none" stroke="#b8b8b8" stroke-width="1.800"><path d="M.8 5L4 1.800 7.200 5"/></svg><svg class="h-[7px] w-2" viewBox="0 0 8 7" fill="none" stroke="#b8b8b8" stroke-width="1.800"><path d="M.8 1.800L4 5l3.200-3.200"/></svg></div>
          </div>
        </div>
      </div>
      <p class="mt-[13px] w-[610px]">Числовой формат является наиболее общим способом представления чисел. Для вывода денежных значений используются также форматы ''Денежный'' и ''Финансовый''.</p>
    </div>
    <div class="flex flex-1 items-center justify-end gap-2.5 pr-[7px]">
      <button class="h-[22px] w-[74px] border-2 border-[#0078d7] bg-[#e1e1e1]">ОК</button>
      <button class="h-[22px] w-[74px] border border-[#adadad] bg-[#e1e1e1]">Отмена</button>
    </div>
    <!-- Highlight marks -->
    <div class="pointer-events-none absolute left-[5px] top-[36px] h-[25px] w-[58px] rounded-[10px] border-3 border-[#e30613]"></div>
    <div class="pointer-events-none absolute left-[11px] top-[95px] h-[22px] w-[131px] rounded-[10px] border-3 border-[#e30613]"></div>
  </div>
</div>

<script>
const names = ['Наименование','Кроссовки беговые, размер 35','Кроссовки беговые, размер 39','Кроссовки для баскетбола, размер 39','Кроссовки для баскетбола, размер 41','Кроссовки беговые, размер 40','Кроссовки беговые, размер 40','Кроссовки беговые, размер 41','Кроссовки теннисные, размер 41','Кроссовки теннисные, размер 42','Кроссовки беговые, размер 42','Кроссовки беговые, размер 44','Кроссовки беговые, размер 45','Кроссовки теннисные, размер 38','Кроссовки беговые, размер 35'];
document.getElementById('letters').innerHTML =
  '<th class="h-[21px] border-r border-b border-[#9b9b9b] bg-[#e6e6e6] p-0"><svg class="ml-auto mr-1 h-[13px] w-[13px]" viewBox="0 0 13 13"><path d="M13 0v13H0z" fill="#b5b5b5"/></svg></th>' +
  ['A','B','C','D','E','F','G','H',''].map(c => c === 'E'
    ? '<th class="border-r border-b-2 border-r-[#9b9b9b] border-b-[#0a7a48] bg-[#d2d2d2] p-0 pt-0.5 font-normal leading-4 text-[#0a7a48]">E</th>'
    : `<th class="border-r border-b border-[#9b9b9b] bg-[#e6e6e6] p-0 pt-0.5 font-normal leading-4">${c}</th>`).join('');
let html = '';
for (let r = 1; r <= 21; r++) {
  const head = r === 1 ? 'h-[43px] border-r border-b border-r-[#9b9b9b] border-b-[#c3c3c3] bg-[#e6e6e6] p-0 align-bottom font-normal leading-[18px]'
    : r === 2 ? 'h-[21px] border-r-2 border-b border-r-[#0a7a48] border-b-[#c3c3c3] bg-[#d2d2d2] p-0 pt-0.5 font-normal leading-[18px] text-[#0a7a48]'
    : 'h-[21px] border-r border-b border-r-[#9b9b9b] border-b-[#c3c3c3] bg-[#e6e6e6] p-0 pt-0.5 font-normal leading-[18px]';
  html += `<tr><th class="${head}">${r}</th>`;
  for (let c = 0; c < 9; c++) {
    const cls = r === 1 && c < 5 ? 'border-r border-b border-black bg-[#00b14c] p-0 pt-0.5 pl-0.5 font-bold text-black whitespace-nowrap'
      : r <= 15 && c < 5 ? 'border-r border-b border-black bg-[#ffe699] p-0 pt-0.5 pl-0.5 text-black leading-[18px] whitespace-nowrap overflow-hidden'
      : 'border-r border-b border-[#d0d0d0] p-0';
    html += `<td class="${cls}">${c === 0 && names[r - 1] ? names[r - 1] : ''}</td>`;
  }
  html += '</tr>';
}
document.getElementById('rows').innerHTML = html;
</script>
</body>
</html>
